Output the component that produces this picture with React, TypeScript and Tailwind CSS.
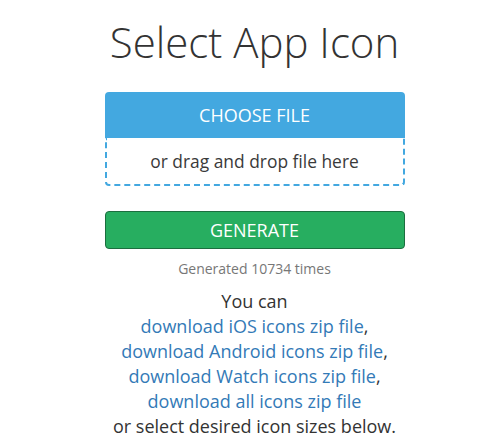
export default function App() {
  return (
    <div className="flex w-full flex-col items-center bg-white pl-[6px] text-[#333] [font-family:'Open_Sans',sans-serif]">
      <h1 className="mt-[20px] text-[42px] font-light leading-[44px]">Select App Icon</h1>

      <div className="mt-[28px] w-[300px]">
        <div className="flex h-[46px] items-center justify-center rounded-t-[4px] bg-[#43a8e0] text-[18px] text-white">
          CHOOSE FILE
        </div>
        <div className="flex h-[48px] items-center justify-center rounded-b-[4px] border-2 border-t-0 border-dashed border-[#43a8e0] text-[17.4px] text-[#3a3a3a]">
          or drag and drop file here
        </div>
      </div>

      <button className="mt-[25px] flex h-[38px] w-[300px] items-center justify-center rounded-[4px] border border-[#1c6e3f] bg-[#27ae60] text-[18px] text-white">
        GENERATE
      </button>

      <p className="mt-[10px] text-[14px] leading-[19px] text-[#777]">Generated 10734 times</p>

      <div className="mt-[11px] text-center text-[18px] leading-[25px]">
        <div>You can</div>
        <div>
          <a className="text-[#337ab7]">download iOS icons zip file</a>,
        </div>
        <div>
          <a className="text-[#337ab7]">download Android icons zip file</a>,
        </div>
        <div>
          <a className="text-[#337ab7]">download Watch icons zip file</a>,
        </div>
        <div>
          <a className="text-[#337ab7]">download all icons zip file</a>
        </div>
        <div>or select desired icon sizes below.</div>
      </div>
    </div>
  );
}
